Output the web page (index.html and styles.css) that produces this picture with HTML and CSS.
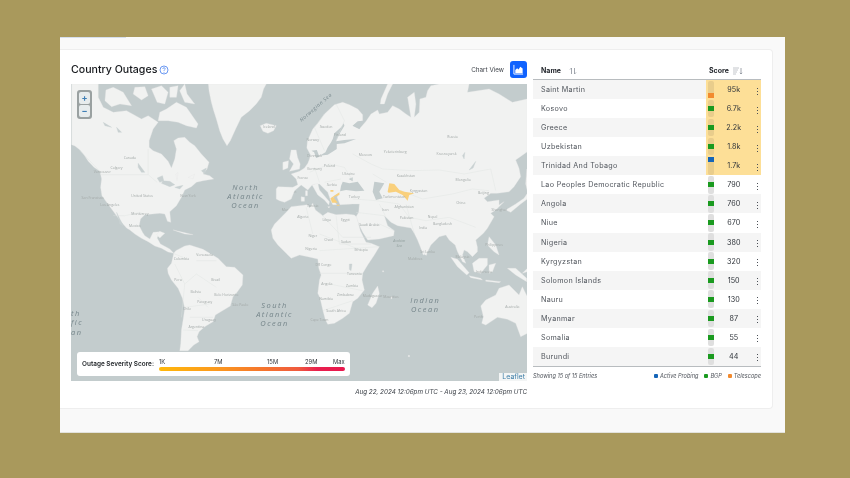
FILE: index.html
```html
<!DOCTYPE html>
<html lang="en">
<head>
<meta charset="utf-8">
<title>Country Outages</title>
<link rel="stylesheet" href="styles.css">
</head>
<body>
<div class="panel">
  <div class="tabline"></div>
  <section class="card">
    <div class="left">
      <header class="head">
        <h1 class="title">Country Outages</h1>
        <svg class="help" viewBox="0 0 10 10"><circle cx="5" cy="5" r="4" fill="none" stroke="#5b8def" stroke-width=".9"/><path d="M3.800 4q0-1.300 1.200-1.300 1.300 0 1.200 1.200C6.100 4.800 5 4.700 5 5.900" fill="none" stroke="#5b8def" stroke-width=".8"/><circle cx="5" cy="7.200" r=".5" fill="#5b8def"/></svg>
        <span class="chartlabel">Chart View</span>
        <span class="chartbtn"><svg viewBox="0 0 12 12" width="11" height="11"><path d="M1 1v10h10" fill="none" stroke="#fff" stroke-width="1"/><path d="M2.500 10V6.500L4.500 4.500 6 6 8 3l2.500 2V10z" fill="#fff"/></svg></span>
      </header>
      <div class="map">
        <svg class="mapsvg" viewBox="0 0 457 297" preserveAspectRatio="none">
          <rect width="457" height="297" class="water"/>
          <g transform="translate(-1,0) scale(.33333)">
            <path class="land" d="M5 0L85 0 85 40 100 70 130 85 170 80 215 105 235 95 265 115 250 135 238 170 238 190 250 200 275 210 295 232 305 252 315 225 320 195 312 170 325 162 345 160 360 175 375 185 395 210 418 235 412 255 400 270 420 275 432 285 400 290 380 295 365 308 345 318 335 340 320 365 300 383 303 415 293 412 285 390 270 388 225 392 212 405 208 425 218 445 225 455 240 465 250 445 270 443 262 462 272 480 300 495 312 508 318 500 345 486 360 483 400 496 420 508 445 523 470 548 495 550 520 573 518 603 500 628 490 638 482 666 462 678 437 693 430 713 405 728 388 743 382 758 388 773 372 783 355 800 330 800 333 778 335 738 340 708 345 673 338 643 325 613 305 588 295 568 293 553 305 538 312 508 295 504 275 493 255 486 235 473 215 463 195 450 180 438 170 432 155 415 140 395 125 375 108 352 96 335 92 310 95 285 90 262 72 250 55 232 42 212 30 198 15 186 5 182Z"/>
            <path class="land" d="M108 18L130 10 160 25 185 65 150 60 125 68 105 50ZM195 10L225 8 235 35 215 48 190 30ZM245 15L275 5 295 25 285 60 262 55ZM290 75L320 55 350 70 385 120 380 132 350 125 325 115 295 110 265 110 270 85ZM330 20L345 0 352 30 375 60 345 55ZM300 10L325 5 320 40 300 40Z"/>
            <path class="land" d="M425 55L418 20 416 0 590 0 582 15 575 40 560 60 540 80 515 100 498 135 482 170 472 185 460 165 450 140 440 105 432 80Z"/>
            <path class="land" d="M572 125L590 118 620 125 612 140 595 148 580 142Z"/>
            <path class="land" d="M665 198L680 198 684 220 692 240 690 255 660 262 672 240 660 225ZM640 235L657 230 655 252 640 258Z"/>
            <path class="land" d="M310 438L340 445 370 452 345 450ZM270 442L285 448 270 462 260 452ZM318 270L325 265 322 290ZM355 280L375 270 370 285Z"/>
            <path class="lake" d="M280 290L300 292 315 302 300 308 275 298ZM262 282L278 275 282 290 270 295ZM315 310L340 304 330 315ZM205 238L225 265 215 265 205 250ZM100 115L125 130 105 125ZM140 130L155 145 145 145ZM395 260L410 252 405 270ZM140 385L160 425 150 420Z"/>
            <path class="border" d="M92 272L235 272 262 295M235 195L235 272M130 395L165 395 210 385 225 392M315 540L345 600 335 700M345 600L380 570 440 610M380 530L440 530M345 670L420 660M30 200L90 262M310 508L340 520M360 700L430 700M385 640L415 670M340 738L385 740"/>
            <g class="pl">
              <text x="180" y="224">Canada</text><text x="140" y="254">Calgary</text><text x="217" y="340">United States</text><text x="120" y="366">Los Angeles</text><text x="210" y="392">Monterrey</text><text x="195" y="428">Mexico</text><text x="355" y="340">New York</text><text x="68" y="346">San Francisco</text><text x="97" y="267">Vancouver</text><text x="598" y="132">Iceland</text><text x="667" y="327">Spain</text><text x="658" y="382">Morocco</text><text x="635" y="447">Mauritania</text>
              <text x="335" y="528">Colombia</text><text x="405" y="515">Venezuela</text><text x="325" y="592">Peru</text><text x="378" y="626">Bolivia</text><text x="438" y="590">Brazil</text><text x="405" y="658">Paraguay</text><text x="352" y="678">Chile</text><text x="418" y="710">Uruguay</text><text x="470" y="635">Belo Horizonte</text><text x="512" y="665">São Paulo</text><text x="380" y="732">Argentina</text>
            </g>
          </g>
          <g transform="translate(229,0) scale(.33333)">
            <path class="land" d="M22 192L24 170 40 135 55 118 75 90 105 62 130 55 150 62 175 75 190 92 190 110 170 118 160 125 180 135 200 112 215 90 235 78 240 90 265 85 280 65 300 75 320 90 335 100 325 40 345 25 350 60 345 100 360 85 362 45 380 40 385 20 395 5 420 0 510 0 505 25 570 15 600 30 640 55 685 45 685 203 650 228 660 253 665 278 645 308 630 323 595 328 575 328 555 343 565 353 600 348 600 363 615 353 590 378 575 388 585 398 565 433 553 448 530 468 535 490 535 503 520 518 505 503 495 498 490 513 500 538 490 533 475 503 468 483 450 468 440 453 420 458 395 483 385 503 372 513 365 493 355 468 345 448 335 432 295 425 275 415 255 395 265 425 285 440 283 455 240 465 205 468 190 445 178 420 170 398 178 385 180 360 160 360 122 362 113 340 118 328 105 335 100 345 112 362 100 362 92 345 85 325 60 300 38 303 25 318 5 303 -15 320 -25 345 -45 355 -60 350 -70 345 -70 315 -65 308 -20 310 -5 302 -10 285 -25 270 0 262 15 252 25 238 30 225 33 212Z"/>
            <path class="land" d="M38 303L55 298 60 318 90 353 88 363 75 348 55 333ZM5 338L15 340 15 352 5 352ZM18 320L24 320 24 335 18 335ZM85 368L92 368 88 372Z"/>
            <path class="land" d="M245 45L265 0 280 0 265 30 255 60 243 60Z"/>
            <path class="land" d="M-40 385L-25 368 0 365 25 362 30 372 40 358 48 378 70 395 85 385 110 392 140 390 165 393 172 400 183 440 200 475 215 478 240 488 225 513 205 543 190 568 188 588 195 618 175 643 160 653 150 688 130 703 105 718 85 721 78 708 70 678 62 643 55 628 60 588 65 573 58 553 55 525 25 518 0 513 -25 523 -40 508 -65 483 -80 463 -85 438 -75 420 -60 405Z"/>
            <path class="water" d="M133 118L125 130 105 148 100 165 95 175 85 190 78 205 60 215 85 212 112 195 112 180 135 178 170 165 135 168 110 172 120 150 135 125ZM36 200L52 198 60 218 50 222 44 205ZM130 293L150 298 175 293 195 320 170 322 140 318 122 322 125 305ZM148 285L160 280 160 292ZM225 293L255 298 240 323 250 343 230 348 220 323ZM160 125L175 112 190 110 180 135Z"/>
            <path class="lake" d="M510 258L530 232 522 252ZM490 215L497 205 495 225Z"/>
            <path class="land" d="M620 378L650 360 675 343 685 328 685 345 665 360 635 385ZM683 255L685 320 680 300Z"/>
            <path class="border" d="M45 130L75 90M75 200L45 130M110 60L135 110 110 170M160 210L215 240 250 255 340 260 420 258 495 270 575 255 590 320M220 270L262 295M300 318L370 345M370 345L460 330 520 315 570 320M30 265L90 240 135 250 160 290M45 250L60 295M75 295L125 285M160 345L230 350 300 360 330 400 380 410 450 400 530 430M240 360L258 395M320 360L345 448M60 385L130 460 215 460M60 450L190 500M60 500L240 488M60 568L190 568M90 600L190 620M70 680L160 650M20 370L40 450M110 395L120 480 215 480M170 385L255 395M240 420L285 440"/>
            <path class="hot" d="M265 323L270 298 285 300 300 318 315 323 345 328 330 333 325 350 310 333 290 323 268 326Z"/>
            <path class="hot" d="M93 343L120 325 120 333 102 340 115 356 98 356ZM93 318L102 318 102 323 93 323ZM112 362L120 362 120 365 112 365Z"/>
            <g transform="translate(0,438)">
              <path class="land" d="M205 225L220 190 235 168 240 190 230 220 218 233ZM378 62L384 66 382 76 376 74ZM455 82L475 88 510 128 503 135 475 110ZM510 137L545 145 550 150 515 143ZM560 150L605 155 600 158 560 154ZM520 100L540 85 565 85 565 105 545 130 525 125ZM570 105L590 100 580 125 570 130ZM570 20L590 45 600 75 585 65 565 45ZM625 115L650 115 683 145 683 155 650 135ZM545 228L560 210 590 195 600 175 630 165 645 180 660 195 670 170 685 200 685 310 665 320 650 280 625 268 595 262 560 285 548 280 553 260Z"/>
              <path class="land" d="M250 122L253 122 253 126 250 126ZM327 376L331 376 331 380 327 380ZM275 200L278 200 278 206 275 206ZM670 130L685 115 685 125Z"/>
              <path class="lake" d="M150 102L158 102 155 122 150 118Z"/>
              <g class="pl">
                <text x="40" y="20">Niger</text><text x="87" y="32">Chad</text><text x="140" y="39">Sudan</text><text x="35" y="60">Nigeria</text><text x="185" y="64">Ethiopia</text><text x="165" y="135">Tanzania</text><text x="82" y="164">Angola</text><text x="158" y="172">Zambia</text><text x="80" y="210">Namibia</text><text x="138" y="199">Zimbabwe</text><text x="220" y="200">Madagascar</text><text x="275" y="205">Mauritius</text><text x="110" y="247">South Africa</text><text x="60" y="274">Cape Town</text><text x="72" y="107">DR Congo</text><text x="348" y="90">Maldives</text><text x="385" y="70">Sri Lanka</text><text x="490" y="84">Malaysia</text><text x="555" y="130">Indonesia</text><text x="585" y="49">Philippines</text><text x="640" y="234">Australia</text><text x="538" y="265">Perth</text>
              </g>
            </g>
            <g class="pl">
              <text x="80" y="132">Sweden</text><text x="40" y="172">Norway</text><text x="122" y="157">Finland</text><text x="45" y="220">Denmark</text><text x="45" y="258">Germany</text><text x="90" y="250">Poland</text><text x="148" y="272">Ukraine</text><text x="198" y="217">Moscow</text><text x="288" y="207">Yekaterinburg</text><text x="460" y="163">Russia</text><text x="442" y="214">Krasnoyarsk</text><text x="320" y="280">Kazakhstan</text><text x="492" y="290">Mongolia</text><text x="165" y="342">Turkey</text><text x="258" y="380">Iran</text><text x="315" y="372">Afghanistan</text><text x="322" y="404">Pakistan</text><text x="400" y="403">Nepal</text><text x="485" y="361">China</text><text x="430" y="424">Bangladesh</text><text x="372" y="435">India</text><text x="138" y="412">Egypt</text><text x="82" y="410">Libya</text><text x="10" y="402">Algeria</text><text x="40" y="370">Tunisia</text><text x="210" y="427">Saudi Arabia</text><text x="285" y="342">Turkmenistan</text><text x="358" y="324">Kyrgyzstan</text><text x="553" y="329">Beijing</text><text x="600" y="382">Shanghai</text><text x="97" y="307">Serbia</text><text x="10" y="284">France</text>
            </g>
          </g>
          <g class="ocean">
            <text x="175" y="106" text-anchor="middle">North</text>
            <text x="175" y="115" text-anchor="middle">Atlantic</text>
            <text x="175" y="124" text-anchor="middle">Ocean</text>
            <text x="204" y="224" text-anchor="middle">South</text>
            <text x="204" y="233" text-anchor="middle">Atlantic</text>
            <text x="204" y="242" text-anchor="middle">Ocean</text>
            <text x="355" y="219" text-anchor="middle">Indian</text>
            <text x="355" y="228" text-anchor="middle">Ocean</text>
            <text x="0" y="232">th</text>
            <text x="0" y="241">fic</text>
            <text x="0" y="251">an</text>
          </g>
          <text class="sea" transform="translate(231,38) rotate(-41)">Norwegian Sea</text>
          <text class="sea2" x="329" y="158" text-anchor="middle">Arabian</text>
          <text class="sea2" x="329" y="163" text-anchor="middle">Sea</text>
        </svg>
        <div class="zoomctl"><span class="zbtn">+</span><span class="zbtn">−</span></div>
        <div class="scale">
          <span class="scaletitle">Outage Severity Score:</span>
          <div class="scaleright">
            <div class="ticks"><span>1K</span><span>7M</span><span>15M</span><span>29M</span><span>Max</span></div>
            <div class="gradient"></div>
          </div>
        </div>
        <a class="attr">Leaflet</a>
      </div>
      <p class="range">Aug 22, 2024 12:06pm UTC - Aug 23, 2024 12:06pm UTC</p>
    </div>
    <div class="right">
      <div class="thead">
        <span class="thname">Name</span>
        <svg class="sorticon" viewBox="0 0 8 8"><path d="M2.500 7V1L1 2.500M5.500 1v6L7 5.500" fill="none" stroke="#8a9099" stroke-width=".8"/></svg>
        <span class="thscore">Score</span>
        <svg class="sorticon2" viewBox="0 0 10 8"><path d="M0 1h6M0 3h5M0 5h4M0 7h3" stroke="#bcc0c5" stroke-width=".9"/><path d="M8 1v6M6.800 5.800L8 7l1.200-1.200" fill="none" stroke="#8a9099" stroke-width=".8"/></svg>
      </div>
      <div class="rows">
        <div class="row alt hotrow"><span class="name">Saint Martin</span><span class="scorecell"><span class="track"><i class="sq orange low"></i></span><span class="val">95k</span><span class="kebab"></span></span></div>
        <div class="row hotrow"><span class="name">Kosovo</span><span class="scorecell"><span class="track"><i class="sq green"></i></span><span class="val">6.7k</span><span class="kebab"></span></span></div>
        <div class="row alt hotrow"><span class="name">Greece</span><span class="scorecell"><span class="track"><i class="sq green"></i></span><span class="val">2.2k</span><span class="kebab"></span></span></div>
        <div class="row hotrow"><span class="name">Uzbekistan</span><span class="scorecell"><span class="track"><i class="sq green"></i></span><span class="val">1.8k</span><span class="kebab"></span></span></div>
        <div class="row alt hotrow"><span class="name">Trinidad And Tobago</span><span class="scorecell"><span class="track"><i class="sq blue high"></i></span><span class="val">1.7k</span><span class="kebab"></span></span></div>
        <div class="row"><span class="name">Lao Peoples Democratic Republic</span><span class="scorecell"><span class="track"><i class="sq green"></i></span><span class="val">790</span><span class="kebab"></span></span></div>
        <div class="row alt"><span class="name">Angola</span><span class="scorecell"><span class="track"><i class="sq green"></i></span><span class="val">760</span><span class="kebab"></span></span></div>
        <div class="row"><span class="name">Niue</span><span class="scorecell"><span class="track"><i class="sq green"></i></span><span class="val">670</span><span class="kebab"></span></span></div>
        <div class="row alt"><span class="name">Nigeria</span><span class="scorecell"><span class="track"><i class="sq green"></i></span><span class="val">380</span><span class="kebab"></span></span></div>
        <div class="row"><span class="name">Kyrgyzstan</span><span class="scorecell"><span class="track"><i class="sq green"></i></span><span class="val">320</span><span class="kebab"></span></span></div>
        <div class="row alt"><span class="name">Solomon Islands</span><span class="scorecell"><span class="track"><i class="sq green"></i></span><span class="val">150</span><span class="kebab"></span></span></div>
        <div class="row"><span class="name">Nauru</span><span class="scorecell"><span class="track"><i class="sq green"></i></span><span class="val">130</span><span class="kebab"></span></span></div>
        <div class="row alt"><span class="name">Myanmar</span><span class="scorecell"><span class="track"><i class="sq green"></i></span><span class="val">87</span><span class="kebab"></span></span></div>
        <div class="row"><span class="name">Somalia</span><span class="scorecell"><span class="track"><i class="sq green"></i></span><span class="val">55</span><span class="kebab"></span></span></div>
        <div class="row alt"><span class="name">Burundi</span><span class="scorecell"><span class="track"><i class="sq green"></i></span><span class="val">44</span><span class="kebab"></span></span></div>
      </div>
      <div class="tfoot">
        <span class="count">Showing 15 of 15 Entries</span>
        <span class="legend">
          <span class="lg"><i class="dot blue"></i>Active Probing</span>
          <span class="lg"><i class="dot green"></i>BGP</span>
          <span class="lg"><i class="dot orange"></i>Telescope</span>
        </span>
      </div>
    </div>
  </section>
</div>
</body>
</html>
```
FILE: styles.css
```css
* { box-sizing: border-box; }
html, body { margin: 0; height: 478px; overflow: hidden; }
body { background: #a9995c; font-family: Inter, "Liberation Sans", sans-serif; color: #2a2f36; }

.panel { width: 725px; height: 396px; margin: 37px 0 0 60px; background: #f9f9f9; border-bottom: 1px solid #e2e2dc; display: flex; flex-direction: column; filter: blur(.3px); }
.tabline { width: 66px; height: 1px; background: #d5deec; }
.card { width: 713px; height: 360px; margin-top: 11px; background: #fff; border: 1px solid #eeeeee; border-left: 0; border-radius: 0 4px 4px 0; padding: 11px 11px 0 11px; display: flex; gap: 6px; }

.left { width: 456px; display: flex; flex-direction: column; }
.head { height: 17px; margin-bottom: 6px; display: flex; align-items: center; }
.title { margin: 0; font-size: 10.600px; font-weight: 500; color: #15181c; }
.help { width: 10px; height: 10px; margin-left: 2px; }
.chartlabel { margin-left: auto; font-size: 6.300px; color: #3a3f46; }
.chartbtn { width: 17px; height: 17px; margin-left: 6px; background: #0f62fe; border-radius: 3px; display: flex; align-items: center; justify-content: center; }

.map { position: relative; height: 297px; background: #c3cccd; overflow: hidden; }
.mapsvg { display: block; width: 100%; height: 100%; }
.water { fill: #c3cccd; }
.land { fill: #f1f2f1; stroke: #e6e8e7; stroke-width: 1; stroke-linejoin: round; }
.lake { fill: #c9d1d2; stroke: #c9d1d2; stroke-width: 1; }
.border { fill: none; stroke: #dfe2e1; stroke-width: 1.200; }
.hot { fill: #f9d07c; }
.ocean text { font-family: "Open Sans", sans-serif; font-style: italic; font-size: 7.500px; letter-spacing: 1.500px; fill: #75858a; }
.sea { font-family: "Open Sans", sans-serif; font-style: italic; font-size: 5px; letter-spacing: .6px; fill: #75858a; }
.sea2 { font-family: "Open Sans", sans-serif; font-style: italic; font-size: 3.500px; fill: #93a09f; }
.pl text { font-family: "Open Sans", sans-serif; font-size: 10.500px; fill: #a3a9a8; text-anchor: middle; }

.zoomctl { position: absolute; left: 6px; top: 6px; width: 15px; height: 29px; padding: 2px; display: flex; flex-direction: column; gap: 1px; background: #9aa1a1; border-radius: 3px; }
.zbtn { flex: 1; background: #e7eced; border-radius: 2px; font-size: 9px; line-height: 11px; font-weight: 700; text-align: center; color: #3f7fb5; }

.scale { position: absolute; left: 6px; bottom: 5px; width: 273px; height: 24px; background: #fff; border-radius: 3px; padding: 0 6px 0 5px; display: flex; align-items: center; gap: 5px; }
.scaletitle { width: 72px; font-size: 6.450px; font-weight: 600; color: #1c2024; white-space: nowrap; flex: none; }
.scaleright { flex: 1; display: flex; flex-direction: column; gap: 2px; }
.ticks { display: grid; grid-template-columns: 55px 53px 38px 28px 1fr; font-size: 5.800px; line-height: 7px; color: #30343a; }
.gradient { height: 4px; border-radius: 2px; background: linear-gradient(90deg, #ffb80a 0%, #fb9a1e 30%, #f5762c 55%, #ef5a3e 75%, #e8204e 85%, #e8174d 100%); }

.attr { position: absolute; right: 0; bottom: 0; height: 8px; padding: 0 2px 0 3px; background: rgba(255,255,255,.8); font-size: 7px; line-height: 8px; color: #3f7fa8; }

.range { margin: 7px 0 0; text-align: right; font-size: 6.300px; font-style: italic; color: #3a3f46; }

.right { width: 228px; display: flex; flex-direction: column; }
.thead { height: 19px; padding: 1px 0 0 8px; border-bottom: 1px solid #b8bcbf; display: flex; align-items: center; font-size: 7px; font-weight: 700; color: #23272d; }
.thname { width: 28px; }
.sorticon { width: 8px; height: 8px; }
.thscore { margin-left: 132px; width: 24px; }
.sorticon2 { width: 10px; height: 8px; }

.rows { display: flex; flex-direction: column; border-bottom: 1px solid #b8bcbf; }
.row { height: 19.070px; display: flex; align-items: center; justify-content: space-between; padding-left: 8px; font-size: 7.200px; letter-spacing: .3px; color: #50555c; background: #fff; }
.row.alt { background: #f5f5f5; }
.name { white-space: nowrap; }
.scorecell { width: 55px; height: 100%; padding-left: 2px; display: flex; align-items: center; color: #2f343a; letter-spacing: 0; }
.hotrow .scorecell { background: #fddf97; }
.track { width: 5.500px; height: 17.500px; border-radius: 2px; background: #dfdfdf; display: flex; align-items: center; flex: none; }
.hotrow .track { background: #e9cd8c; }
.sq { display: block; width: 100%; height: 5px; }
.sq.low { margin-top: 12.500px; }
.sq.high { margin-top: -12.500px; }
.green { background: #1a9a1f; }
.orange { background: #f28a2e; }
.blue { background: #1565b8; }
.val { flex: 1; text-align: center; padding-left: 1px; padding-right: 1px; }
.kebab { width: 7px; height: 8px; margin-top: 2px; flex: none; margin-right: 0; background: radial-gradient(circle at center, #4a4f56 .7px, transparent .9px) center top / 7px 3px repeat-y; }

.tfoot { display: flex; justify-content: space-between; align-items: center; padding-top: 6px; font-size: 5.600px; font-style: italic; color: #50555c; }
.legend { display: flex; gap: 6px; }
.lg { display: flex; align-items: center; gap: 2px; }
.dot { display: block; width: 4px; height: 4px; border-radius: 1px; }
```
